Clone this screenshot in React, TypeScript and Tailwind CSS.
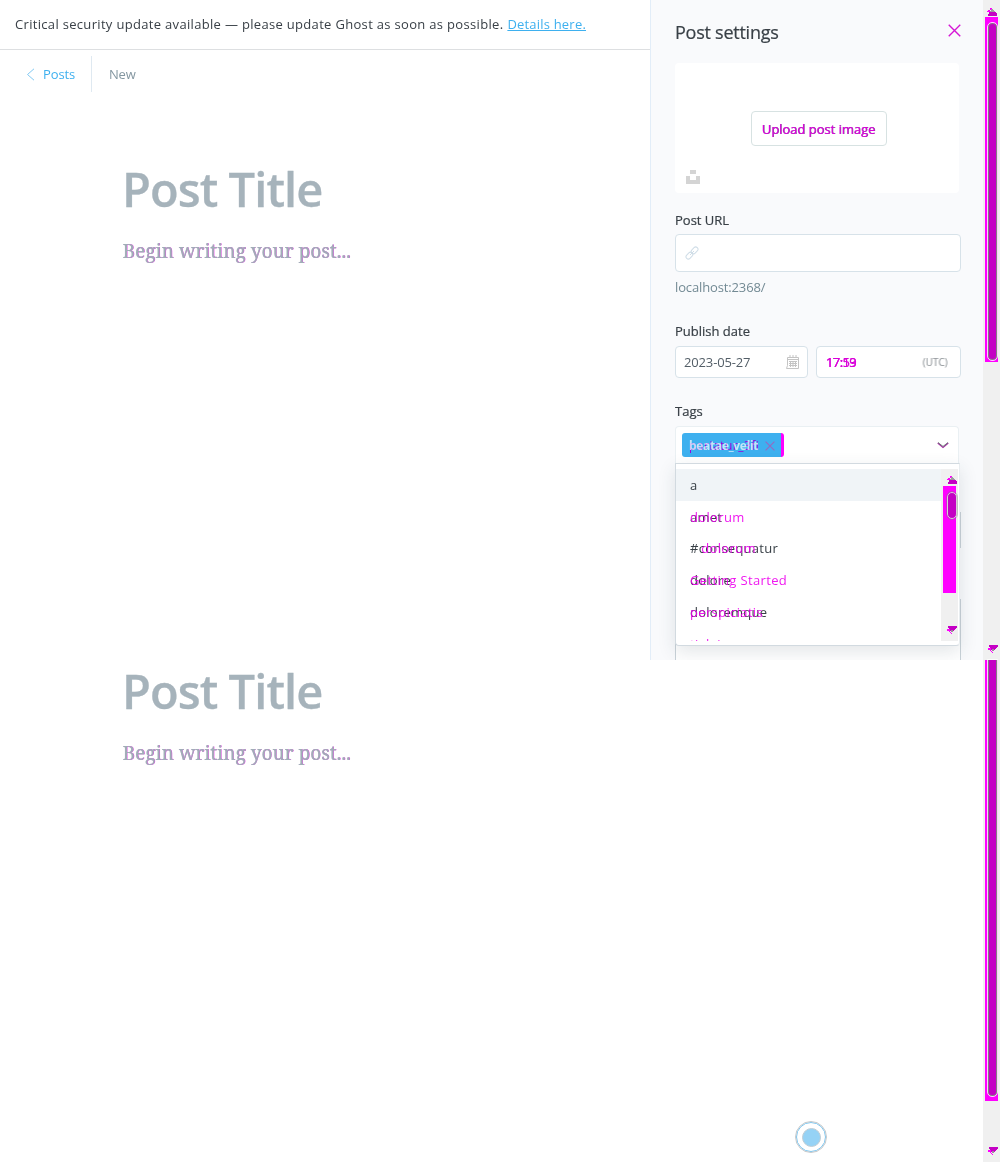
import React from "react";

const fieldBox = "border border-[#d7e2e9] rounded-[4px] bg-white";
const label = "h-[20px] shrink-0 leading-[20px] [-webkit-text-stroke:0.2px_#394047]";

function Overlap({ children, className = "" }: { children: React.ReactNode; className?: string }) {
  return <span className={"grid justify-items-start whitespace-nowrap *:[grid-area:1/1] " + className}>{children}</span>;
}

function Arrow({ down = false }: { down?: boolean }) {
  return down ? (
    <svg width="11" height="8" viewBox="0 0 11 8" shapeRendering="crispEdges">
      <path d="M1 3h3v4H6v1H5V6H3V5H1z" fill="#ff00ff" />
      <path d="M2 0h9v2h-1v1H9v1H8v1H7v1H5V5H4V3H3V2H2z" fill="#c400c4" />
      <path d="M5 4h2v2H5z" fill="#9c8c9c" />
    </svg>
  ) : (
    <svg width="11" height="8" viewBox="0 0 11 8" shapeRendering="crispEdges">
      <path d="M1 3h1V2h2V0h2v2H4v2H1z" fill="#ff00ff" />
      <path d="M5 1h2v1h1v1h1v1H4V3h1z" fill="#a098a0" />
      <path d="M3 4h7v1h1v3H2V6h1z" fill="#c400c4" />
    </svg>
  );
}

function Cross({ size, className }: { size: number; className: string }) {
  return (
    <svg width={size} height={size} viewBox="0 0 14 14" fill="none" stroke="currentColor" className={className}>
      <path d="M.8.8l12.4 12.4M13.2.8L.8 13.2" strokeWidth="1.5" />
    </svg>
  );
}

function EditorText({ className }: { className: string }) {
  return (
    <div className={"pl-[122px] " + className}>
      <div className="font-['Open_Sans'] text-[47px] font-semibold leading-[60px] tracking-[-0.93px] text-[#a6b3bb] whitespace-nowrap [-webkit-text-stroke:0.3px_#a6b3bb]">
        Post Title
      </div>
      <Overlap className="mt-[17px] ml-px font-['Noto_Serif','Liberation_Serif',serif] text-[19px] leading-[30px] tracking-[0.03px]">
        <span className="text-[#e83ce8]">Begin writing your post...</span>
        <span className="relative -left-[0.4px] text-[#a0aeb7] [-webkit-text-stroke:0.2px_#a0aeb7]">Begin writing your post...</span>
      </Overlap>
    </div>
  );
}

function Option({ first, second, className = "" }: { first: string; second?: string; className?: string }) {
  return (
    <div className={"flex h-[31.8px] shrink-0 items-center pl-[14px] text-[13px] leading-[20px] tracking-[0.25px] " + className}>
      <Overlap>
        <span className="text-[#394047]">{first}</span>
        {second && <span className="tracking-[0.35px] text-[#ee00ee] whitespace-pre opacity-90">{second}</span>}
      </Overlap>
    </div>
  );
}

export default function App() {
  return (
    <div className="flex h-[1162px] w-[1000px] flex-col overflow-hidden bg-white font-['Open_Sans',sans-serif] text-[13px] text-[#394047]">
      <div className="flex h-[660px] shrink-0 overflow-hidden">
        <main className="flex w-[650px] shrink-0 flex-col">
          <div className="flex h-[50px] shrink-0 items-center border-b border-[#dddfe1] pl-[15px] text-[13px] tracking-[0.32px] whitespace-nowrap">
            <span>Critical security update available — please update Ghost as soon as possible.</span>
            <a className="ml-1 tracking-[0.2px] text-[#3eb0ef] underline">Details here.</a>
          </div>
          <header className="flex h-[48px] shrink-0 items-center pl-[26px] text-[13px]">
            <svg width="9" height="13" viewBox="0 0 9 13" fill="none" stroke="#82c9f2" className="mr-2">
              <path d="M8 .8L1.5 6.5 8 12.2" />
            </svg>
            <span className="w-[48px] pt-[2px] tracking-[-0.1px] text-[#3eb0ef]">Posts</span>
            <span className="mr-[17px] h-9 w-px bg-[#dfe9f1]" />
            <span className="pt-[2px] tracking-[-0.2px] text-[#8497a1]">New</span>
          </header>
          <EditorText className="pt-[61px]" />
        </main>

        <aside className="flex w-[333px] shrink-0 flex-col border-l border-[#e2edf8] bg-[#f9fafc] pr-[22px] pl-6">
          <div className="flex h-[63px] shrink-0 items-center justify-between">
            <h1 className="pt-px text-[18px] tracking-[-0.25px] [-webkit-text-stroke:0.2px_#394047]">Post settings</h1>
            <Cross size={13} className="relative -top-px text-[#d516d5]" />
          </div>
          <div className="flex h-[130px] w-[284px] shrink-0 flex-col rounded-[4px] bg-white">
            <button className="mt-12 ml-[76px] flex h-[35px] w-[136px] shrink-0 items-center justify-center rounded-[4px] border border-[#d7e2e2] pt-[2px]">
              <Overlap className="text-[13px] tracking-[-0.02px]">
                <span className="text-[#667781]">Upload post image</span>
                <span className="relative -left-[0.5px] text-[#dc00dc] [-webkit-text-stroke:0.2px_#dc00dc]">Upload post image</span>
              </Overlap>
            </button>
            <svg width="14" height="14" viewBox="0 0 14 14" fill="#d4d4d4" className="mt-[24px] ml-[11px]">
              <path d="M4 0h6v4H4zM0 6h4v4h6V6h4v8H0z" />
            </svg>
          </div>
          <div className={"mt-[17px] " + label}>Post URL</div>
          <div className={"mt-[4px] flex h-[38px] w-[286px] shrink-0 items-center pl-[9px] " + fieldBox}>
            <svg width="14" height="14" viewBox="0 0 14 14" fill="none" stroke="#cfdde7">
              <rect x="5.8" y="2.1" width="7.6" height="4.6" rx="2.3" transform="rotate(-45 9.6 4.4)" />
              <rect x=".6" y="7.3" width="7.6" height="4.6" rx="2.3" transform="rotate(-45 4.4 9.6)" />
              <path d="M5 9l4-4" />
            </svg>
          </div>
          <div className="mt-[5px] h-[20px] shrink-0 leading-[20px] tracking-[-0.13px] text-[#738a94]">localhost:2368/</div>
          <div className={"mt-[24px] " + label}>Publish date</div>
          <div className="mt-[5px] flex h-[32px] w-[286px] shrink-0 gap-2">
            <div className={"flex w-[133px] items-center justify-between pt-px pr-[7px] pl-2 " + fieldBox}>
              <span className="tracking-[-0.15px] text-[#535e67]">2023-05-27</span>
              <svg width="14" height="14" viewBox="0 0 14 14" fill="none" stroke="#c4c4c4" className="relative -top-px">
                <path d="M1.5 2.5h11v11h-12l1-3zM1.5 4.5h11M4 0v3M7 0v3M10 0v3M3 6.5h8M3 8.5h8M3 10.5h8M4.5 6v6M7 6v6M9.5 6v6" />
              </svg>
            </div>
            <div className={"flex flex-1 items-center justify-between pt-px pr-3 pl-[9px] " + fieldBox}>
              <Overlap className="text-[13px] tracking-[-0.6px] text-[#d900d9] [-webkit-text-stroke:0.2px_#d900d9]">
                <span>17:59</span>
                <span>17:13</span>
              </Overlap>
              <Overlap className="text-[10px] text-[#aeb4b8]">
                <span>(UTC)</span>
                <span className="relative -left-px text-[#d5d5d5] mix-blend-multiply">(UTC)</span>
              </Overlap>
            </div>
          </div>
          <div className={"mt-[23px] " + label}>Tags</div>
          <div className="relative mt-[5px] w-[286px] shrink-0">
            <div className="flex h-[37px] w-[284px] items-center rounded-t-[4px] border border-b-0 border-[#eaf0f3] bg-white pl-[6px]">
              <div className="flex h-6 w-[102px] items-center rounded-[3px] border-r-[3px] border-[#ff00ff] bg-[#3eb0ef] pt-px pl-[7px]">
                <Overlap className="w-[76px] text-[12px] leading-[20px]">
                  <span className="tracking-[0.5px] text-[#9c00df]">pariatur_3fi</span>
                  <span className="font-bold tracking-[-0.3px] text-[#e4f3fb] opacity-80">beatae_velit</span>
                </Overlap>
                <Cross size={10} className="text-[#9868c0]" />
              </div>
              <svg width="12" height="7" viewBox="0 0 12 7" fill="none" className="mr-[9px] ml-auto">
                <path d="M.7 1L6 5.5 11.3 1" stroke="#a32ca3" strokeWidth="1.2" />
                <path d="M1 .5L6 4.4 11 .5" stroke="#667a70" strokeWidth=".9" />
              </svg>
            </div>

            {/* Fields that continue underneath the open menu */}
            <div className="h-[50px]" />
            <div className="-mt-px h-[36px] border-x border-[#c9d2d8] bg-white" />
            <div className="mt-[51px] h-[80px] border-x border-[#c9d2d8] bg-white" />

            <div className="absolute top-[37px] left-0 flex h-[183px] w-[285px] flex-col rounded-b-[4px] border border-[#d2dae0] border-r-[#e8edf0] bg-white pt-[5px] shadow-[0_6px_18px_rgba(40,60,80,0.13)]">
              <div className="flex h-[172px] w-[282px] overflow-hidden">
                <div className="flex flex-1 flex-col overflow-hidden">
                  <Option first="a" className="bg-[#f0f4f7]" />
                  <Option first="amet" second="dolorum" />
                  <Option first="#consequatur" second="   dolorum" />
                  <Option first="dolore" second="Getting Started" />
                  <Option first="doloremque" second="perspiciatis" />
                  <Option first="" second="ti  l  i" />
                </div>
                <div className="flex w-[17px] shrink-0 flex-col items-center bg-[#f0f0f0]">
                  <div className="flex h-[17px] items-center pt-[5px] pl-[3px]"><Arrow /></div>
                  <div className="flex h-[107px] w-[13px] shrink-0 justify-end border-l-[3px] border-[#ff00ff] bg-[#ff00ff] pt-[6px]">
                    <div className="relative left-px h-[27px] w-[10px] rounded-full border border-[#d8d0d8] bg-[#c400c4] outline outline-[#777]/40" />
                  </div>
                  <div className="mt-auto pb-[7px] pl-[3px]"><Arrow down /></div>
                </div>
              </div>
            </div>
          </div>
        </aside>

        <div className="flex w-[17px] flex-col items-center bg-[#f0f0f0]">
          <div className="flex h-[17px] shrink-0 items-center pt-[6px]"><Arrow /></div>
          <div className="h-[345px] w-[13px] shrink-0 bg-[#ff00ff] pt-[6px] pl-[3px]">
            <div className="h-[337px] w-[9px] rounded-[4px] border border-[#808080] bg-[#c400c4] outline outline-white/80" />
          </div>
          <div className="mt-auto pb-[7px] pl-px"><Arrow down /></div>
        </div>
      </div>

      <div className="flex h-[502px] shrink-0">
        <main className="flex w-[983px] flex-col justify-between">
          <EditorText className="pt-px" />
          <div className="mb-[10px] ml-[796px] flex size-[30px] items-center justify-center rounded-full border-[1.5px] border-[#7cc6f0] outline outline-[#c6c8ca]">
            <div className="size-[19px] rounded-full border border-[#bfcdd5] bg-[#95d2f5]" />
          </div>
        </main>
        <div className="flex w-[17px] flex-col items-center bg-[#f0f0f0]">
          <div className="h-[441px] w-[13px] shrink-0 bg-[#ff00ff] pl-[3px]">
            <div className="h-[436px] w-[9px] rounded-b-[4px] border border-t-0 border-[#808080] bg-[#c400c4] outline outline-white/80" />
          </div>
          <div className="mt-auto pb-[7px] pl-px"><Arrow down /></div>
        </div>
      </div>
    </div>
  );
}
